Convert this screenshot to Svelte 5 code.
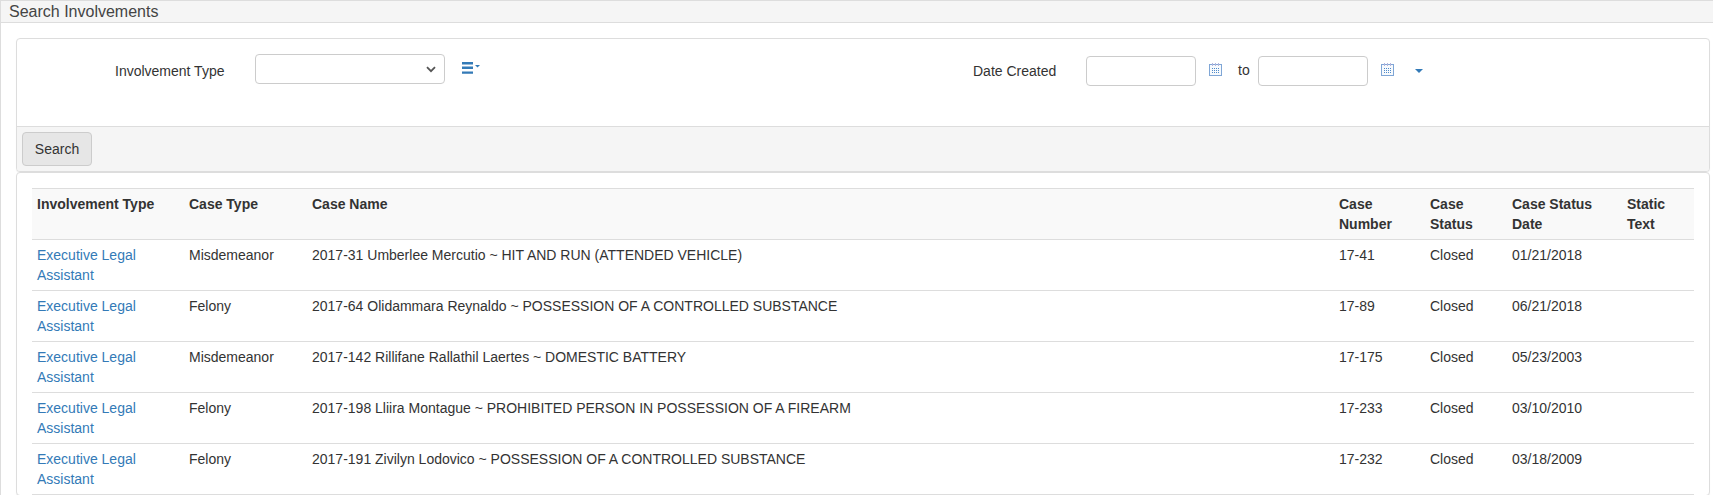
<script>
  const rows = [
    { type: 'Misdemeanor', name: '2017-31 Umberlee Mercutio ~ HIT AND RUN (ATTENDED VEHICLE)', num: '17-41', date: '01/21/2018' },
    { type: 'Felony', name: '2017-64 Olidammara Reynaldo ~ POSSESSION OF A CONTROLLED SUBSTANCE', num: '17-89', date: '06/21/2018' },
    { type: 'Misdemeanor', name: '2017-142 Rillifane Rallathil Laertes ~ DOMESTIC BATTERY', num: '17-175', date: '05/23/2003' },
    { type: 'Felony', name: '2017-198 Lliira Montague ~ PROHIBITED PERSON IN POSSESSION OF A FIREARM', num: '17-233', date: '03/10/2010' },
    { type: 'Felony', name: '2017-191 Zivilyn Lodovico ~ POSSESSION OF A CONTROLLED SUBSTANCE', num: '17-232', date: '03/18/2009' },
  ];
</script>

{#snippet calendar()}
  <svg class="cal" width="13" height="13" viewBox="0 0 13 13" aria-hidden="true">
    <rect x="0.5" y="1.5" width="12" height="11" fill="#f7fafd" stroke="#7fa6d6" />
    <path d="M3.5 0v3M6.5 0v3M9.5 0v3" stroke="#b4b4dc" />
    <path d="M3 5.5h7M3 7.5h7M3 9.5h7" stroke="#4f8ac9" stroke-dasharray="1 1" />
  </svg>
{/snippet}

<div class="page">
  <div class="title">Search Involvements</div>
  <div class="content">
    <section class="panel search">
      <div class="form">
        <div class="field left">
          <label for="inv">Involvement Type</label>
          <div class="select-wrap">
            <select id="inv"><option></option></select>
            <svg class="chevron" width="10" height="7" viewBox="0 0 10 7" aria-hidden="true">
              <path d="M1 1.2l4 4 4-4" fill="none" stroke="#555" stroke-width="1.8" />
            </svg>
          </div>
          <svg class="list" width="18" height="12" viewBox="0 0 18 12" aria-hidden="true">
            <path d="M0 0h11v2.4H0zM0 4.6h11V7H0zM0 9.4h11v2.4H0z" fill="#337ab7" />
            <path d="M13 3h5l-2.5 2.6z" fill="#337ab7" />
          </svg>
        </div>
        <div class="field right">
          <label for="from">Date Created</label>
          <input id="from" type="text" />
          {@render calendar()}
          <span class="to">to</span>
          <input type="text" aria-label="Date Created to" />
          {@render calendar()}
          <span class="caret"></span>
        </div>
      </div>
      <div class="footer">
        <button type="button">Search</button>
      </div>
    </section>

    <section class="panel results">
      <table>
        <colgroup>
          <col style="width:152px" />
          <col style="width:123px" />
          <col />
          <col style="width:91px" />
          <col style="width:82px" />
          <col style="width:115px" />
          <col style="width:72px" />
        </colgroup>
        <thead>
          <tr>
            <th>Involvement Type</th>
            <th>Case Type</th>
            <th>Case Name</th>
            <th>Case Number</th>
            <th>Case Status</th>
            <th>Case Status Date</th>
            <th>Static Text</th>
          </tr>
        </thead>
        <tbody>
          {#each rows as r}
            <tr>
              <td><a href="#top">Executive Legal Assistant</a></td>
              <td>{r.type}</td>
              <td>{r.name}</td>
              <td>{r.num}</td>
              <td>Closed</td>
              <td>{r.date}</td>
              <td></td>
            </tr>
          {/each}
        </tbody>
      </table>
    </section>
  </div>
</div>

<style>
  :global(body) {
    margin: 0;
    background: #fff;
    overflow: hidden;
    font-family: "Liberation Sans", Arial, sans-serif;
    font-size: 14px;
    line-height: 20px;
    color: #333;
  }
  .page {
    height: 495px;
    overflow: hidden;
    border-left: 1px solid #ddd;
    box-sizing: border-box;
  }
  .title {
    height: 21px;
    margin-left: -1px;
    padding-left: 9px;
    background: #f5f5f5;
    border-top: 1px solid #ddd;
    border-bottom: 1px solid #ddd;
    font-size: 16px;
    line-height: 22px;
    color: #444;
  }
  .content {
    padding: 15px 3px 0 15px;
  }
  .panel {
    background: #fff;
    border: 1px solid #ddd;
    border-radius: 4px;
    box-shadow: 0 1px 1px rgba(0, 0, 0, 0.05);
  }
  .form {
    display: flex;
    height: 87px;
    box-sizing: border-box;
    padding-top: 15px;
  }
  .field {
    display: flex;
    align-items: flex-start;
  }
  .left {
    width: 956px;
  }
  label {
    font-weight: normal;
    padding-top: 7px;
  }
  .left label {
    margin-left: 98px;
    width: 140px;
  }
  .right label {
    width: 113px;
  }
  .select-wrap {
    position: relative;
    height: 30px;
  }
  select {
    display: block;
    width: 190px;
    height: 30px;
    background: #fff;
    border: 1px solid #ccc;
    border-radius: 4px;
    font: inherit;
    appearance: none;
  }
  .chevron {
    position: absolute;
    top: 12px;
    right: 9px;
    pointer-events: none;
  }
  .list {
    margin: 8px 0 0 17px;
  }
  input {
    width: 110px;
    height: 30px;
    box-sizing: border-box;
    margin-top: 2px;
    border: 1px solid #ccc;
    border-radius: 4px;
    font: inherit;
  }
  .cal {
    margin: 9px 0 0 13px;
  }
  .to {
    margin: 6px 8px 0 16px;
  }
  .caret {
    width: 0;
    height: 0;
    margin: 15px 0 0 21px;
    border-top: 4px solid #337ab7;
    border-left: 4px solid transparent;
    border-right: 4px solid transparent;
  }
  .footer {
    padding: 5px;
    background: #f5f5f5;
    border-top: 1px solid #ddd;
    border-radius: 0 0 3px 3px;
    height: 34px;
  }
  button {
    width: 70px;
    height: 34px;
    padding: 0;
    background: #e6e6e6;
    border: 1px solid #ccc;
    border-radius: 4px;
    color: #333;
    font: inherit;
  }
  .results {
    padding: 15px 15px 0;
  }
  table {
    width: 100%;
    table-layout: fixed;
    border-collapse: collapse;
    border-spacing: 0;
  }
  th, td {
    padding: 5px;
    text-align: left;
    vertical-align: top;
    overflow: hidden;
  }
  th {
    background: #f9f9f9;
    font-weight: bold;
    border-top: 1px solid #ddd;
    border-bottom: 1px solid #ddd;
  }
  td {
    border-bottom: 1px solid #ddd;
  }
  a {
    color: #337ab7;
    text-decoration: none;
  }
</style>
